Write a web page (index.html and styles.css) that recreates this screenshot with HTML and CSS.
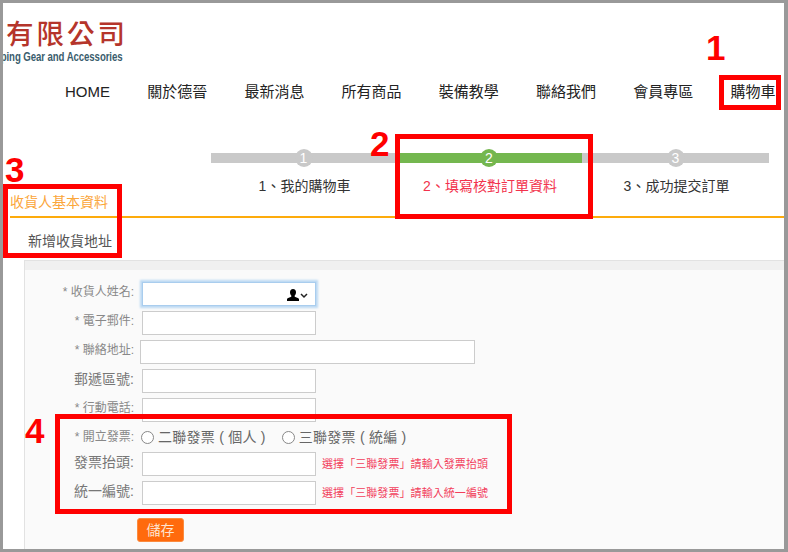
FILE: index.html
```html
<!DOCTYPE html>
<html lang="zh-Hant">
<head>
<meta charset="utf-8">
<title>填寫核對訂單資料</title>
<link rel="stylesheet" href="styles.css">
</head>
<body>
<div class="frame">
  <header class="header">
    <div class="logo">
      <div class="logo-cn">有限公司</div>
      <div class="logo-en">Camping Gear and Accessories</div>
    </div>
    <nav class="nav">
      <a>HOME</a><a>關於德晉</a><a>最新消息</a><a>所有商品</a><a>裝備教學</a><a>聯絡我們</a><a>會員專區</a><a>購物車</a>
    </nav>
  </header>

  <div class="steps">
    <div class="step"><div class="bar"><span class="dot">1</span></div><div class="step-label">1、我的購物車</div></div>
    <div class="step active"><div class="bar"><span class="dot">2</span></div><div class="step-label">2、填寫核對訂單資料</div></div>
    <div class="step"><div class="bar"><span class="dot">3</span></div><div class="step-label">3、成功提交訂單</div></div>
  </div>

  <div class="section-title">收貨人基本資料</div>
  <div class="add-address">新增收貨地址</div>

  <section class="panel">
    <div class="panel-band"></div>
    <form class="form">
      <div class="row"><label class="lbl">* 收貨人姓名:</label>
        <div class="input focus"><svg class="contact-icon" viewBox="0 0 21 12" width="21" height="12"><path d="M6 0c2 0 3 1.400 3 3.300 0 1.400-.6 2.600-1.300 3.200v1.200c1.500.6 3.800 1.100 4.300 2.300V12H0v-2c.5-1.200 2.800-1.700 4.300-2.300V6.500C3.600 5.900 3 4.700 3 3.300 3 1.400 4 0 6 0z" fill="#000"/><path d="M14 5l3 3 3-3" fill="none" stroke="#222" stroke-width="1.500"/></svg></div></div>
      <div class="row"><label class="lbl">* 電子郵件:</label><div class="input"></div></div>
      <div class="row"><label class="lbl">* 聯絡地址:</label><div class="input wide"></div></div>
      <div class="row"><label class="lbl big">郵遞區號:</label><div class="input"></div></div>
      <div class="row"><label class="lbl">* 行動電話:</label><div class="input"></div></div>
      <div class="row radios"><label class="lbl">* 開立發票:</label>
        <span class="radio"></span><span class="radio-text">二聯發票 ( 個人 )</span>
        <span class="radio second"></span><span class="radio-text">三聯發票 ( 統編 )</span></div>
      <div class="row"><label class="lbl big">發票抬頭:</label><div class="input"></div><span class="hint">選擇「三聯發票」請輸入發票抬頭</span></div>
      <div class="row"><label class="lbl big">統一編號:</label><div class="input"></div><span class="hint">選擇「三聯發票」請輸入統一編號</span></div>
      <div class="actions"><button type="button" class="save">儲存</button></div>
    </form>
  </section>

  <div class="mark box-1"></div>
  <div class="mark box-2"></div>
  <div class="mark box-3"></div>
  <div class="mark box-4"></div>
  <div class="num num-1">1</div>
  <div class="num num-2">2</div>
  <div class="num num-3">3</div>
  <div class="num num-4">4</div>
</div>
</body>
</html>
```
FILE: styles.css
```css
* { box-sizing: border-box; }
html, body { margin: 0; padding: 0; }
body { font-family: "Liberation Sans", "Noto Sans CJK TC", sans-serif; background: #fff; }

.frame {
  position: relative;
  width: 788px;
  height: 552px;
  overflow: hidden;
  border: 3px solid #999;
  border-right-width: 4px;
  background: #fff;
}

.header { height: 150px; padding-top: 16px; }
.logo { width: 125px; overflow: hidden; display: flex; flex-direction: column; align-items: flex-end; white-space: nowrap; }
.logo-cn { font-size: 27.500px; line-height: 31px; letter-spacing: 3px; color: #b5352b; font-weight: 500; }
.logo-en { margin-right: 5px; font-size: 13px; line-height: 14px; color: #3a5d6d; font-weight: 700; letter-spacing: -.1px; transform: scaleX(.74); transform-origin: right center; }

.nav { display: flex; gap: 37.200px; padding: 18px 0 0 62px; font-size: 15px; line-height: 20px; color: #222; white-space: nowrap; }

.steps { display: grid; grid-template-columns: 185px 186px 187px; margin-left: 208px; height: 40px; }
.step { position: relative; text-align: center; }
.bar { height: 10px; background: #c9c9c9; }
.dot {
  position: absolute; left: 50%; top: -4px; width: 18px; height: 18px; margin-left: -9px;
  border-radius: 50%; background: #c9c9c9; color: #fff; font-size: 14px; line-height: 18px; text-align: center;
}
.step-label { margin-top: 13px; padding-left: 2px; font-size: 14px; line-height: 20px; color: #333; }
.active .bar, .active .dot { background: #74b74f; }
.active .step-label { color: #f2324c; }

.section-title { margin-left: 7px; height: 25px; padding-bottom: 5px; border-bottom: 2px solid #fdab0c; font-size: 14px; line-height: 18px; color: #fba63a; }
.add-address { height: 42px; padding: 14px 0 0 25px; font-size: 14px; line-height: 18px; color: #555; }

.panel { margin-left: 21px; height: 300px; background: #fafafa; border-left: 1px solid #e2e2e2; border-top: 1px solid #e2e2e2; }
.panel-band { height: 9px; background: #f0f0f0; }
.form { padding-top: 12px; }
.row { display: flex; align-items: center; height: 24px; margin-bottom: 5px; }
.lbl { width: 109px; margin-bottom: 4px; text-align: right; font-size: 12px; line-height: 20px; color: #888; white-space: nowrap; }
.lbl.big { font-size: 14px; color: #777; }
.radios .lbl { margin-bottom: 0; }
.input { position: relative; width: 174px; height: 24px; margin-left: 8px; background: #fff; border: 1px solid #ccc; }
.input.wide { width: 335px; margin-left: 6px; }
.input.focus { border-color: #a9cdee; box-shadow: 0 0 2px 2px #bcd9f3; }
.contact-icon { position: absolute; right: 7px; top: 6px; }

.radios { height: 20px; }
.radio { width: 13px; height: 13px; margin-left: 7px; border: 1px solid #888; border-radius: 50%; background: #fff; }
.radio.second { margin-left: 16px; }
.radio-text { margin-left: 4px; font-size: 14px; letter-spacing: .25px; line-height: 20px; color: #666; white-space: pre; }
.hint { margin-left: 6px; font-size: 11px; letter-spacing: .07px; line-height: 16px; color: #f2405c; white-space: nowrap; }

.actions { padding: 8px 0 0 112px; }
.save { width: 47px; height: 24px; padding: 0; border: 1px solid #fb8b3f; border-radius: 3px; background: #ff6a0d; color: #fde4d0; font: inherit; font-size: 14px; line-height: 20px; }

.mark { position: absolute; border: 5px solid #f00; }
.box-1 { left: 716px; top: 72px; width: 62px; height: 35px; }
.box-2 { left: 392px; top: 131px; width: 198px; height: 85px; }
.box-3 { left: 0; top: 181px; width: 119px; height: 74px; }
.box-4 { left: 52px; top: 411px; width: 457px; height: 100px; }

.num { position: absolute; font-size: 35px; line-height: 36px; font-weight: 700; color: #f00; }
.num-1 { left: 703px; top: 27px; }
.num-2 { left: 367px; top: 123px; }
.num-3 { left: 2px; top: 149px; }
.num-4 { left: 22px; top: 410px; }
```
